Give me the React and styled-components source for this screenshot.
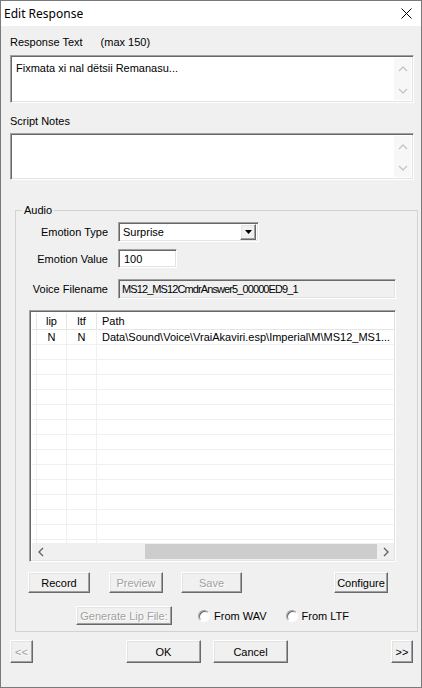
import styled, { createGlobalStyle } from "styled-components";

const GlobalStyle = createGlobalStyle`
  html, body {
    margin: 0;
    padding: 0;
    background: #f0f0f0;
  }
  body {
    font-family: "Liberation Sans", Arial, sans-serif;
    font-size: 11px;
    color: #000;
  }
  * {
    box-sizing: border-box;
  }
`;

const Window = styled.div`
  width: 422px;
  height: 688px;
  border: 1px solid #7a7a7a;
  background: #f0f0f0;
  display: flex;
  flex-direction: column;
  overflow: hidden;
`;

const TitleBar = styled.div`
  height: 25px;
  flex: none;
  background: #fff;
  display: flex;
  align-items: center;
  justify-content: space-between;
  padding: 0 9px 0 3px;
  font-family: "Noto Sans", "Open Sans", sans-serif;
  font-size: 12px;
`;

const Body = styled.div`
  display: flex;
  flex-direction: column;
  padding: 0 7px 0 9px;
`;

const Caption = styled.div`
  display: flex;
  gap: 18px;
  height: 13px;
  line-height: 13px;
  margin-top: ${(p) => p.$top}px;
`;

const sunken = `
  border: 1px solid;
  border-color: #a0a0a0 #fff #fff #a0a0a0;
  box-shadow: inset 1px 1px 0 #696969, inset -1px -1px 0 #e3e3e3;
`;

const raised = `
  border: 1px solid;
  border-color: #fff #696969 #696969 #fff;
  box-shadow: inset -1px -1px 0 #a0a0a0, inset 1px 1px 0 #e3e3e3;
  background: #f0f0f0;
`;

const TextBox = styled.div`
  ${sunken}
  background: #fff;
  height: ${(p) => p.$h}px;
  margin-top: ${(p) => p.$top}px;
  display: flex;
  padding: 2px;
`;

const TextContent = styled.div`
  flex: 1;
  padding: 4px 3px;
  line-height: 13px;
`;

const VScroll = styled.div`
  width: 17px;
  background: #f7f7f7;
  display: flex;
  flex-direction: column;
  justify-content: space-between;
  align-items: center;
  padding: 7px 0 5px;
`;

const GroupBox = styled.div`
  position: relative;
  margin: 30px -4px 0 5px;
  border: 1px solid #d2d2d2;
  padding: 11px 0 6px;
  display: flex;
  flex-direction: column;
`;

const GroupTitle = styled.span`
  position: absolute;
  top: -7px;
  left: 6px;
  padding: 0 2px;
  line-height: 13px;
  background: #f0f0f0;
`;

const FieldRow = styled.div`
  display: flex;
  align-items: center;
  margin-top: ${(p) => p.$top || 0}px;
`;

const FieldLabel = styled.div`
  width: 92px;
  margin-right: 10px;
  text-align: right;
`;

const Input = styled.div`
  ${sunken}
  width: ${(p) => p.$w}px;
  height: ${(p) => p.$h}px;
  background: ${(p) => (p.$readonly ? "#f0f0f0" : "#fff")};
  display: flex;
  align-items: center;
  padding-left: ${(p) => p.$pad || 4}px;
  letter-spacing: ${(p) => p.$tight || 0}px;
  white-space: nowrap;
`;

const Combo = styled.div`
  ${sunken}
  width: 141px;
  height: 20px;
  background: #fff;
  display: flex;
  align-items: center;
  padding: 2px;
`;

const ComboText = styled.div`
  flex: 1;
  padding-left: 2px;
`;

const ComboArrow = styled.div`
  ${raised}
  width: 16px;
  height: 16px;
  display: flex;
  align-items: center;
  justify-content: center;
`;

const List = styled.div`
  ${sunken}
  background: #fff;
  margin: 11px 0 0 13px;
  width: 367px;
  height: 252px;
  padding: 2px 1px 1px 2px;
  display: flex;
  flex-direction: column;
`;

const Grid = styled.div`
  flex: 1;
  overflow: hidden;
`;

const GridRow = styled.div`
  display: grid;
  grid-template-columns: 4px 30px 30px 1fr;
  height: ${(p) => (p.$head ? 17 : 15)}px;
  border-bottom: 1px solid ${(p) => (p.$head ? "#e5e5e5" : "#f0f0f0")};
`;

const Cell = styled.div`
  border-left: ${(p) => (p.$first ? "none" : `1px solid ${p.$head ? "#e5e5e5" : "#f0f0f0"}`)};
  display: flex;
  align-items: center;
  justify-content: ${(p) => (p.$left ? "flex-start" : "center")};
  padding-left: ${(p) => (p.$left ? 5 : 0)}px;
  white-space: nowrap;
  overflow: hidden;
`;

const HScroll = styled.div`
  height: 17px;
  flex: none;
  background: #f0f0f0;
  display: flex;
  align-items: stretch;
`;

const ScrollArrow = styled.div`
  width: 17px;
  display: flex;
  align-items: center;
  justify-content: center;
`;

const ScrollTrack = styled.div`
  flex: 1;
  display: flex;
  justify-content: flex-end;
  padding: 1px 0;
`;

const Thumb = styled.div`
  width: 232px;
  background: #cdcdcd;
`;

const ButtonRow = styled.div`
  display: flex;
  align-items: center;
  margin-top: ${(p) => p.$top}px;
  padding-right: ${(p) => p.$right || 0}px;
`;

const Button = styled.div`
  ${raised}
  width: ${(p) => p.$w}px;
  height: ${(p) => p.$h || 21}px;
  margin-left: ${(p) => (p.$auto ? "auto" : `${p.$ml || 0}px`)};
  display: flex;
  align-items: center;
  justify-content: center;
  color: ${(p) => (p.$disabled ? "#a0a0a0" : "#000")};
  text-shadow: ${(p) => (p.$disabled ? "1px 1px 0 #fff" : "none")};
  white-space: nowrap;
`;

const Radio = styled.label`
  display: flex;
  align-items: center;
  gap: 4px;
  margin-left: ${(p) => p.$ml}px;
`;

const RadioDot = styled.span`
  width: 12px;
  height: 12px;
  border-radius: 50%;
  background: #fff;
  border: 1px solid;
  border-color: #a0a0a0 #fff #fff #a0a0a0;
  box-shadow: inset 1px 1px 0 #696969;
`;

const Chevron = ({ dir, color = "#c4c4c4" }) => {
  const pts = {
    up: "1,6 5,2 9,6",
    down: "1,2 5,6 9,2",
    left: "6,1 2,5 6,9",
    right: "2,1 6,5 2,9",
  }[dir];
  const horizontal = dir === "left" || dir === "right";
  return (
    <svg width={horizontal ? 8 : 10} height={horizontal ? 10 : 8} viewBox={horizontal ? "0 0 8 10" : "0 0 10 8"}>
      <polyline points={pts} fill="none" stroke={color} strokeWidth="1.3" />
    </svg>
  );
};

const MultiLine = ({ h, top, children }) => (
  <TextBox $h={h} $top={top}>
    <TextContent>{children}</TextContent>
    <VScroll>
      <Chevron dir="up" />
      <Chevron dir="down" />
    </VScroll>
  </TextBox>
);

const rows = [
  { lip: "N", ltf: "N", path: "Data\\Sound\\Voice\\VraiAkaviri.esp\\Imperial\\M\\MS12_MS1..." },
  ...Array.from({ length: 15 }, () => ({ lip: "", ltf: "", path: "" })),
];

export default function App() {
  return (
    <>
      <GlobalStyle />
      <Window>
        <TitleBar>
          <span>Edit Response</span>
          <svg width="11" height="11" viewBox="0 0 11 11">
            <path d="M0.5 0.5 L10.5 10.5 M10.5 0.5 L0.5 10.5" stroke="#000" strokeWidth="1" />
          </svg>
        </TitleBar>
        <Body>
          <Caption $top={10}>
            <span>Response Text</span>
            <span>(max 150)</span>
          </Caption>
          <MultiLine h={48} top={6}>
            Fixmata xi nal dëtsii Remanasu...
          </MultiLine>
          <Caption $top={12}>
            <span>Script Notes</span>
          </Caption>
          <MultiLine h={47} top={5} />

          <GroupBox>
            <GroupTitle>Audio</GroupTitle>
            <FieldRow>
              <FieldLabel>Emotion Type</FieldLabel>
              <Combo>
                <ComboText>Surprise</ComboText>
                <ComboArrow>
                  <svg width="7" height="4" viewBox="0 0 7 4">
                    <polygon points="0,0 7,0 3.5,4" fill="#000" />
                  </svg>
                </ComboArrow>
              </Combo>
            </FieldRow>
            <FieldRow $top={7}>
              <FieldLabel>Emotion Value</FieldLabel>
              <Input $w={59} $h={19} $pad={5}>100</Input>
            </FieldRow>
            <FieldRow $top={11}>
              <FieldLabel>Voice Filename</FieldLabel>
              <Input $w={278} $h={20} $pad={3} $tight={-0.9} $readonly>
                MS12_MS12CmdrAnswer5_00000ED9_1
              </Input>
            </FieldRow>

            <List>
              <Grid>
                <GridRow $head>
                  <Cell $first $head />
                  <Cell $head>lip</Cell>
                  <Cell $head>ltf</Cell>
                  <Cell $head $left>Path</Cell>
                </GridRow>
                {rows.map((r, i) => (
                  <GridRow key={i}>
                    <Cell $first />
                    <Cell>{r.lip}</Cell>
                    <Cell>{r.ltf}</Cell>
                    <Cell $left>{r.path}</Cell>
                  </GridRow>
                ))}
              </Grid>
              <HScroll>
                <ScrollArrow>
                  <Chevron dir="left" color="#606060" />
                </ScrollArrow>
                <ScrollTrack>
                  <Thumb />
                </ScrollTrack>
                <ScrollArrow>
                  <Chevron dir="right" color="#606060" />
                </ScrollArrow>
              </HScroll>
            </List>

            <ButtonRow $top={10} $right={29}>
              <Button $w={62} $ml={12}>Record</Button>
              <Button $w={54} $ml={19} $disabled>Preview</Button>
              <Button $w={61} $ml={18} $disabled>Save</Button>
              <Button $w={54} $auto>Configure</Button>
            </ButtonRow>
            <ButtonRow $top={13}>
              <Button $w={96} $h={19} $ml={60} $disabled>Generate Lip File:</Button>
              <Radio $ml={26}>
                <RadioDot />
                From WAV
              </Radio>
              <Radio $ml={19}>
                <RadioDot />
                From LTF
              </Radio>
            </ButtonRow>
          </GroupBox>

          <ButtonRow $top={8} $right={1}>
            <Button $w={23} $h={23} $disabled>&lt;&lt;</Button>
            <Button $w={75} $h={23} $ml={93}>OK</Button>
            <Button $w={75} $h={23} $ml={12}>Cancel</Button>
            <Button $w={22} $h={23} $auto>&gt;&gt;</Button>
          </ButtonRow>
        </Body>
      </Window>
    </>
  );
}
